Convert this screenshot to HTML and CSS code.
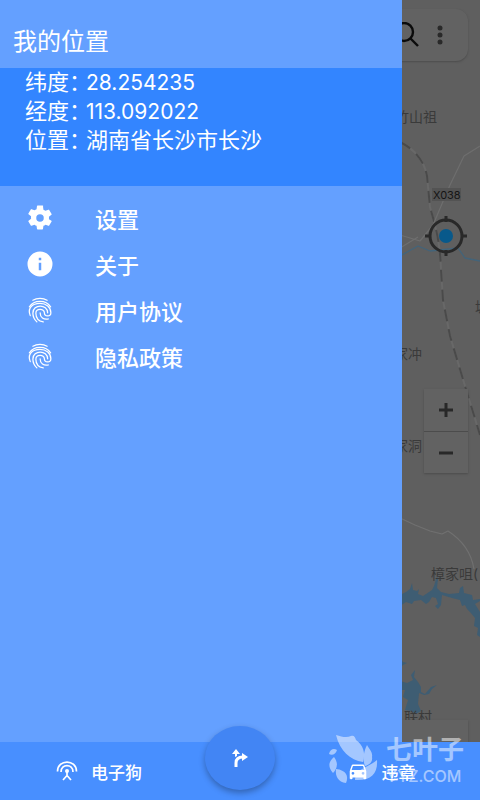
FILE: index.html
```html
<!DOCTYPE html>
<html lang="zh-CN">
<head>
    <meta charset="UTF-8">
    <meta name="viewport" content="width=device-width, initial-scale=1.0">
    <title>我的位置</title>
    <link rel="stylesheet" href="styles.css">
</head>
<body>
    <!-- Map behind the drawer -->
    <div class="map">
        <svg class="map-canvas" viewBox="0 0 480 800" preserveAspectRatio="xMaxYMin slice">
            <g fill="none" stroke-linecap="butt" stroke-linejoin="round">
                <path d="M400 142C414 149 424 160 427 176L430 207C435 225 440 240 441 270L443 300L450 336L465 386L480 435" stroke="#686868" stroke-width="2"/>
                <path d="M400 142C414 149 424 160 427 176L430 207C435 225 440 240 441 270L443 300L450 336L465 386L480 435" stroke="#4a4a4a" stroke-width="2" stroke-dasharray="12 8"/>
                <path d="M400 235L420 241L433 225L450 185L464 156L480 146M418 237L400 248" stroke="#6e6e6e" stroke-width="1.2"/>
                <path d="M400 518L415 525L430 531L442 534L448 531C462 540 471 551 474 569" stroke="#707070" stroke-width="1.2"/>
                <path d="M400 256L418 246L430 251L458 248L465 258L480 261" stroke="#43647a" stroke-width="1.3"/>
            </g>
            <g fill="#3e5d73">
                <path d="M400 595L406 592L410 589L412 583L413 590L417 591L419 589L418 594L423 596L432 590L434 586L437 576L438 579L437 588L441 592L449 594L459 593L460 588L463 586L464 593L472 595L473 600L480 599V601L475 604L480 612V637L477 635L478 628L474 626L475 618L470 612L467 609L465 605L462 606L460 600L452 598L442 595L441 605L438 609L435 606L438 604L436 598L432 597L429 602L426 604L421 600L414 601L412 604L406 602L400 606Z"/>
                <path d="M400 657L403 662L407 663L403 665L400 668ZM400 681L407 683L413 680L411 675L415 670L414 677L418 682L421 687L421 692L425 694L431 687L437 685L432 689L429 694L424 695L419 693L418 704L421 711L416 714L411 711L405 710L408 700L403 697L405 690L400 690Z"/>
            </g>
            <g class="map-label">
                <text x="395" y="122">竹山祖</text>
                <text x="394" y="359">家冲</text>
                <text x="394" y="451">家洞</text>
                <text x="475" y="312">塘</text>
                <text x="431" y="579">樟家咀(</text>
                <text x="404" y="722">联村</text>
            </g>
            <rect x="432" y="188" width="29" height="13" fill="#535353"/>
            <text class="road-label" x="433" y="199">X038</text>
            <g stroke="#292929" fill="none">
                <circle cx="446" cy="236" r="16" stroke-width="3"/>
                <path d="M446 216v6M446 250v6M425 236h6M461 236h6" stroke-width="3"/>
            </g>
            <circle cx="446" cy="236" r="7" fill="#08598b"/>
        </svg>

        <div class="search-bar">
            <button class="icon-button" aria-label="搜索">
                <svg width="26" height="26" viewBox="0 0 26 26" fill="none" stroke="#0b0b0b" stroke-width="2.4">
                    <circle cx="11" cy="10" r="9"/>
                    <path d="M17 16l8 8"/>
                </svg>
            </button>
            <button class="icon-button" aria-label="更多">
                <svg width="26" height="26" viewBox="0 0 26 26" fill="#292929">
                    <circle cx="13" cy="6" r="2.5"/>
                    <circle cx="13" cy="13" r="2.5"/>
                    <circle cx="13" cy="20" r="2.5"/>
                </svg>
            </button>
        </div>

        <div class="zoom-controls">
            <button aria-label="放大">
                <svg width="14" height="14" viewBox="0 0 14 14"><path d="M7 0v14M0 7h14" stroke="#282828" stroke-width="3"/></svg>
            </button>
            <button aria-label="缩小">
                <svg width="14" height="14" viewBox="0 0 14 14"><path d="M0 7h14" stroke="#282828" stroke-width="3"/></svg>
            </button>
        </div>
        <div class="scale-box"></div>
    </div>

    <aside class="drawer">
        <h1>我的位置</h1>
        <dl class="location">
            <dt>纬度：</dt><dd class="coordinate">28.254235</dd>
            <dt>经度：</dt><dd class="coordinate">113.092022</dd>
            <dt>位置：</dt><dd>湖南省长沙市长沙</dd>
        </dl>
        <ul class="menu">
            <li><a href="#">
                <svg class="menu-icon" viewBox="0 0 24 24"><path d="M19.14 12.94c.04-.3.06-.61.06-.94s-.02-.64-.07-.94l2.03-1.58a.49.49 0 0 0 .12-.61l-1.92-3.32a.49.49 0 0 0-.59-.22l-2.39.96a7 7 0 0 0-1.62-.94l-.36-2.54A.48.48 0 0 0 13.92 2h-3.84a.48.48 0 0 0-.48.41l-.36 2.54a7 7 0 0 0-1.62.94l-2.39-.96a.48.48 0 0 0-.59.22L2.72 8.47a.48.48 0 0 0 .12.61l2.03 1.58c-.05.3-.07.62-.07.94s.02.64.07.94l-2.03 1.58a.49.49 0 0 0-.12.61l1.92 3.32c.12.22.37.29.59.22l2.39-.96c.5.38 1.03.7 1.62.94l.36 2.54c.05.24.24.41.48.41h3.84c.24 0 .44-.17.47-.41l.36-2.54a7 7 0 0 0 1.62-.94l2.39.96c.22.08.47 0 .59-.22l1.92-3.32a.48.48 0 0 0-.12-.61zM12 15a3 3 0 1 1 0-6 3 3 0 0 1 0 6z"/></svg>
                设置</a></li>
            <li><a href="#">
                <svg class="menu-icon" viewBox="0 0 24 24"><path d="M12 2a10 10 0 1 0 0 20 10 10 0 0 0 0-20zm1 15h-2v-6h2zm0-8h-2V7h2z"/></svg>
                关于</a></li>
            <li><a href="#">
                <svg class="menu-icon" viewBox="0 0 24 24"><use href="#fingerprint"/></svg>
                用户协议</a></li>
            <li><a href="#">
                <svg class="menu-icon" viewBox="0 0 24 24">
                    <g id="fingerprint" fill="none" stroke="#fff" stroke-width="1" stroke-linecap="round">
                        <path d="M6.3 4.2C9.6 2.1 14.4 2.1 17.7 4.2"/>
                        <path d="M3.500 9.500C7.200 3.500 16.800 3.500 20.500 9.500"/>
                        <path d="M4.200 16.500C1.800 11 5.500 6.700 12 6.700C17 6.700 20.700 9.800 20.700 14.200C20.700 17.600 15.500 17.600 15.500 14.200C15.500 10.500 8.700 10.500 8.700 14.500C8.700 18 11 20.800 14.600 21.500"/>
                        <path d="M9.500 21.500C7.500 19.500 6.300 17.300 6.300 14.500C6.300 6.900 18.100 7.200 18.100 14.200"/>
                        <path d="M12.100 14.200C12.100 18 14.900 20 18.700 19.200"/>
                    </g>
                </svg>
                隐私政策</a></li>
        </ul>
    </aside>

    <nav class="bottom-bar">
        <a href="#">
            <svg width="22" height="22" viewBox="0 0 22 22" fill="none" stroke="#fff" stroke-width="1.7">
                <path d="M1.500 11.500C1.500-1 20.500-1 20.500 11.500M5 12C5 3.500 17 3.500 17 12M11 12v4M7 20l4-4.500 4 4.500"/>
                <circle cx="11" cy="11" r="2" fill="#fff" stroke="none"/>
            </svg>
            电子狗</a>
        <button class="route-button" aria-label="路线">
            <svg width="18" height="20" viewBox="0 0 18 20">
                <path d="M5 19v-4c0-5 3-6 7-6" fill="none" stroke="#fff" stroke-width="3"/>
                <path d="M11 5l6 4-6 4zM1 6l4-5 4 5zM4 5h2v3l-2 1z" fill="#fff"/>
            </svg>
        </button>
        <a href="#">
            <svg width="22" height="22" viewBox="0 0 24 24" fill="#fff"><path d="M18.920 6.010A1.500 1.500 0 0 0 17.500 5h-11c-.66 0-1.210.42-1.420 1.010L3 12v8c0 .55.45 1 1 1h1c.55 0 1-.45 1-1v-1h12v1c0 .55.45 1 1 1h1c.55 0 1-.45 1-1v-8zM6.500 16a1.500 1.500 0 1 1 0-3 1.500 1.500 0 0 1 0 3zm11 0a1.500 1.500 0 1 1 0-3 1.500 1.500 0 0 1 0 3zM5 11l1.500-4.500h11L19 11z"/></svg>
            违章</a>
    </nav>

    <div class="watermark">
        <svg width="50" height="52" viewBox="0 0 50 52" fill="#fff">
            <path d="M8 1C14 3 19 4 23 2C26 1 27 3 28 6C35 11 38 19 35 28C22 26 12 17 8 1Z"/>
            <path d="M39 11C41 15 45 18 44 23C45 28 41 31 37 32C34 25 36 17 39 11Z"/>
            <path d="M49 26C50 40 43 47 27 46C28 34 38 35 49 26Z"/>
            <path d="M8 35C18 36 21 42 18 49C10 48 7 42 8 35Z"/>
            <path d="M6 23C10 28 10 34 5 39C0 33 0 28 6 23Z"/>
            <path d="M1 20C2 15 6 14 9 16C8 20 4 22 1 20Z"/>
        </svg>
        <p>七叶子<small>YYZ.COM</small></p>
    </div>
</body>
</html>
```
FILE: styles.css
```css
* {
    box-sizing: border-box;
}
body {
    position: relative;
    display: flex;
    flex-direction: column;
    min-height: 100vh;
    margin: 0;
    font-family: Inter, "Noto Sans CJK SC", sans-serif;
    color: #fff;
    background-color: #5f5f5f;
    overflow-x: hidden;
}
h1, dl, dd, ul, p {
    margin: 0;
    padding: 0;
}
a {
    color: inherit;
    text-decoration: none;
}
button {
    padding: 0;
    border: none;
    background: none;
    cursor: pointer;
}
svg {
    display: block;
    flex: none;
}

/* Map */
.map {
    position: absolute;
    inset: 0;
    overflow: hidden;
}
.map-canvas {
    width: 100%;
    height: 100%;
}
.map-label {
    font-size: 14px;
    fill: #3a3a3a;
}
.road-label {
    font-size: 11px;
    fill: #151515;
}
.search-bar {
    position: absolute;
    top: 9px;
    left: 12px;
    right: 12px;
    display: flex;
    justify-content: flex-end;
    align-items: center;
    gap: 8px;
    height: 52px;
    padding-right: 15px;
    border-radius: 12px;
    background-color: #626262;
    box-shadow: 0 1px 2px #4c4c4c;
}
.zoom-controls {
    position: absolute;
    top: 389px;
    right: 12px;
    width: 44px;
    background-color: #626262;
    box-shadow: 0 1px 2px #4c4c4c;
}
.zoom-controls button {
    display: flex;
    align-items: center;
    justify-content: center;
    width: 100%;
    height: 42px;
}
.zoom-controls button + button {
    border-top: 1px solid #4c4c4c;
}
.scale-box {
    position: absolute;
    right: 12px;
    bottom: 58px;
    width: 80px;
    height: 22px;
    background-color: #626262;
    box-shadow: 0 1px 2px #4c4c4c;
}

/* Drawer */
.drawer {
    position: relative;
    flex: 1;
    width: calc(100% - 78px);
    background-color: #64a0ff;
}
.drawer h1 {
    padding: 24px 13px 8px;
    font-size: 24px;
    font-weight: 400;
    line-height: 36px;
}
.location {
    display: grid;
    grid-template-columns: 61px 1fr;
    align-content: start;
    min-height: 118px;
    padding: 0 25px;
    font-size: 22px;
    line-height: 29px;
    background-color: #3385ff;
}
.location dt {
    white-space: nowrap;
}
.coordinate {
    font-size: 21px;
}
.menu {
    padding-top: 9px;
    list-style: none;
}
.menu a {
    display: flex;
    align-items: center;
    gap: 40px;
    height: 46px;
    padding-left: 25px;
    font-size: 22px;
    font-weight: 500;
}
.menu-icon {
    width: 30px;
    height: 30px;
    fill: #fff;
}

/* Bottom bar */
.bottom-bar {
    position: relative;
    display: grid;
    grid-template-columns: 1fr 84px 1fr;
    align-items: center;
    justify-items: center;
    height: 58px;
    background-color: #488fff;
}
.bottom-bar a {
    display: flex;
    align-items: center;
    gap: 13px;
    font-size: 17px;
    font-weight: 500;
}
.route-button {
    display: flex;
    align-items: center;
    justify-content: center;
    width: 70px;
    height: 64px;
    margin-top: -26px;
    border-radius: 50%;
    background-color: #4285f4;
    box-shadow: 0 3px 6px rgba(0, 0, 0, 0.3);
}

/* Watermark */
.watermark {
    position: absolute;
    right: 16px;
    bottom: 14px;
    display: flex;
    gap: 8px;
    opacity: 0.5;
    pointer-events: none;
}
.watermark p {
    font-size: 26px;
    font-weight: 700;
    line-height: 32px;
}
.watermark small {
    display: block;
    font-size: 16px;
    font-weight: 500;
    line-height: 20px;
}
```
